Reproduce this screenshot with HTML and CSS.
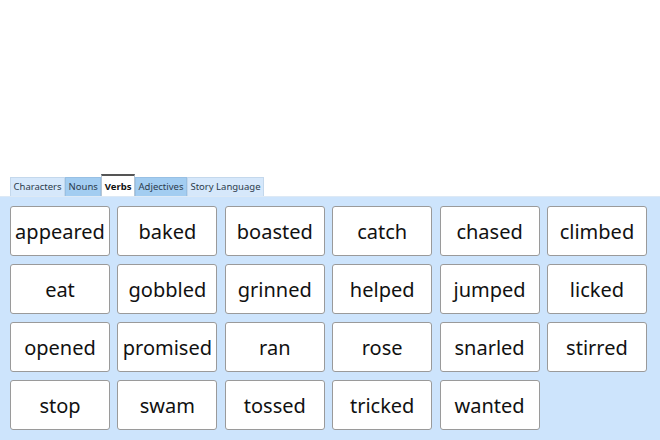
FILE: index.html
```html
<!DOCTYPE html>
<html lang="en">
<head>
  <meta charset="UTF-8" />
  <meta name="viewport" content="width=device-width, initial-scale=1.0" />
  <title>Word Bank</title>
  <link rel="stylesheet" href="styles.css">
</head>
<body>
  <div class="spacer"></div>

  <div class="tabs">
    <div class="tab light">Characters</div>
    <div class="tab dark">Nouns</div>
    <div class="tab active">Verbs</div>
    <div class="tab dark">Adjectives</div>
    <div class="tab light">Story Language</div>
  </div>

  <div class="panel">
    <div class="words">
      <div class="word">appeared</div>
      <div class="word">baked</div>
      <div class="word">boasted</div>
      <div class="word">catch</div>
      <div class="word">chased</div>
      <div class="word">climbed</div>
      <div class="word">eat</div>
      <div class="word">gobbled</div>
      <div class="word">grinned</div>
      <div class="word">helped</div>
      <div class="word">jumped</div>
      <div class="word">licked</div>
      <div class="word">opened</div>
      <div class="word">promised</div>
      <div class="word">ran</div>
      <div class="word">rose</div>
      <div class="word">snarled</div>
      <div class="word">stirred</div>
      <div class="word">stop</div>
      <div class="word">swam</div>
      <div class="word">tossed</div>
      <div class="word">tricked</div>
      <div class="word">wanted</div>
    </div>
  </div>
</body>
</html>
```

FILE: styles.css
```css
/* General Styles */
body {
  margin: 0;
  padding: 0;
  background: #ffffff;
  font-family: "Noto Sans", "Open Sans", sans-serif;
  color: #111;
  overflow: hidden;
}

.spacer {
  height: 174px;
}

/* Tabs */
.tabs {
  display: flex;
  align-items: flex-end;
  padding-left: 10px;
  height: 22px;
}

.tab {
  height: 19px;
  box-sizing: border-box;
  padding: 0 2.5px;
  font-size: 9.5px;
  line-height: 18px;
  color: #2b3b4c;
  border: 1px solid #c4d8ec;
  border-bottom: none;
}

.tab.light {
  background: #d6e8fb;
}

.tab.dark {
  background: #a3cdf1;
  border-color: #98c0e4;
}

.tab.active {
  height: 22px;
  line-height: 21px;
  background: #ffffff;
  color: #111;
  font-weight: bold;
  border: 1px solid #b5c6d6;
  border-top: 2px solid #555;
  border-bottom: none;
}

/* Word Panel */
.panel {
  background: #cde4fc;
  border-top: 1px solid #dde9f5;
  height: 244px;
  padding: 9px 10px 0 10px;
}

.words {
  display: grid;
  grid-template-columns: repeat(6, 100px);
  grid-auto-rows: 50px;
  column-gap: 7.4px;
  row-gap: 8px;
}

.word {
  background: #ffffff;
  border: 1px solid #9a9a9a;
  border-radius: 3px;
  display: flex;
  align-items: center;
  justify-content: center;
  font-size: 20px;
  color: #111;
}
```
